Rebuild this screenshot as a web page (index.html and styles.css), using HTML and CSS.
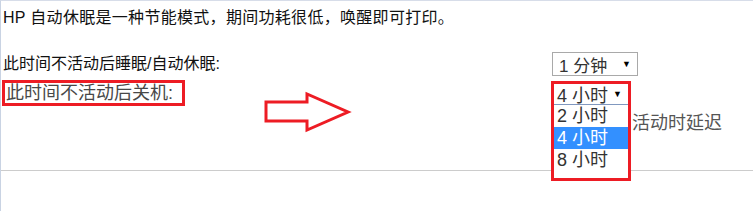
FILE: index.html
```html
<!DOCTYPE html>
<html lang="zh-CN">
<head>
<meta charset="utf-8">
<title>自动休眠</title>
<link rel="stylesheet" href="styles.css">
</head>
<body>
<div class="page">
  <p class="intro">HP 自动休眠是一种节能模式，期间功耗很低，唤醒即可打印。</p>
  <div class="row row1">
    <span class="label">此时间不活动后睡眠/自动休眠:</span>
    <div class="select">
      <span>1 分钟</span><span class="caret">▼</span>
    </div>
  </div>
  <div class="row row2">
    <span class="label boxed">此时间不活动后关机:</span>
    <div class="dd-anchor">
      <div class="dd">
        <div class="dd-sel"><span>4 小时</span><span class="caret">▼</span></div>
        <ul class="dd-list">
          <li>2 小时</li>
          <li class="active">4 小时</li>
          <li>8 小时</li>
        </ul>
      </div>
    </div>
  </div>
  <div class="row row3">
    <span></span>
    <span class="note">活动时延迟</span>
  </div>
  <div class="rule"></div>
  <svg class="arrow" width="96" height="46" viewBox="0 0 96 46">
    <polygon points="7,13 48,13 48,5 89,23 48,41 48,32 7,32" fill="#fff" stroke="#ed1c24" stroke-width="3"/>
  </svg>
</div>
</body>
</html>
```
FILE: styles.css
```css
html, body {
  margin: 0;
  padding: 0;
  background: #fff;
}
.page {
  position: relative;
  box-sizing: border-box;
  width: 753px;
  height: 211px;
  border-left: 1px solid #c9d3e3;
  border-top: 1px solid #d7dde9;
  padding-left: 2px;
  font-family: "Liberation Sans", "Noto Sans CJK SC", sans-serif;
  color: #000;
  overflow: hidden;
}
.intro {
  margin: 0;
  padding-top: 6px;
  font-size: 16px;
  line-height: 22px;
  letter-spacing: 0.3px;
  color: #111;
}
.row {
  display: grid;
  grid-template-columns: 549px 1fr;
  align-items: center;
}
.row1 {
  margin-top: 23px;
  height: 24px;
}
.label {
  font-size: 16px;
  line-height: 22px;
  color: #111;
}
.select {
  box-sizing: border-box;
  width: 86px;
  height: 24px;
  border: 1px solid #a9a9a9;
  padding: 0 6px 0 6px;
  display: flex;
  justify-content: space-between;
  align-items: center;
  font-size: 17px;
  color: #333;
}
.caret {
  font-size: 9px;
  color: #000;
}
.row2 {
  margin-top: 4px;
  height: 26px;
}
.boxed {
  box-sizing: border-box;
  width: 183px;
  height: 26px;
  margin-left: -1px;
  border: 3px solid #ed1c24;
  padding-left: 1px;
  font-size: 18px;
  line-height: 20px;
  color: #484848;
}
.dd-anchor {
  position: relative;
  height: 26px;
}
.dd {
  position: absolute;
  top: 1px;
  left: -1px;
  box-sizing: border-box;
  width: 80px;
  border: 3px solid #ed1c24;
  background: #fff;
  z-index: 2;
}
.dd-sel {
  height: 20px;
  border-bottom: 1px solid #8098bf;
  display: flex;
  justify-content: space-between;
  align-items: center;
  padding: 0 6px 0 3px;
  font-size: 18px;
  color: #333;
}
.dd-list {
  list-style: none;
  margin: 0;
  padding: 0 0 7px 0;
}
.dd-list li {
  height: 22px;
  line-height: 22px;
  padding-left: 3px;
  font-size: 18px;
  color: #333;
}
.dd-list li.active {
  background: #3390ff;
  color: #fff;
}
.row3 {
  margin-top: 4px;
  height: 26px;
}
.note {
  margin-left: 80px;
  font-size: 18px;
  line-height: 26px;
  color: #555;
}
.rule {
  margin-top: 34px;
  margin-left: -2px;
  height: 0;
  border-top: 1px solid #cccccc;
}
.arrow {
  position: absolute;
  left: 258px;
  top: 88px;
}
```
